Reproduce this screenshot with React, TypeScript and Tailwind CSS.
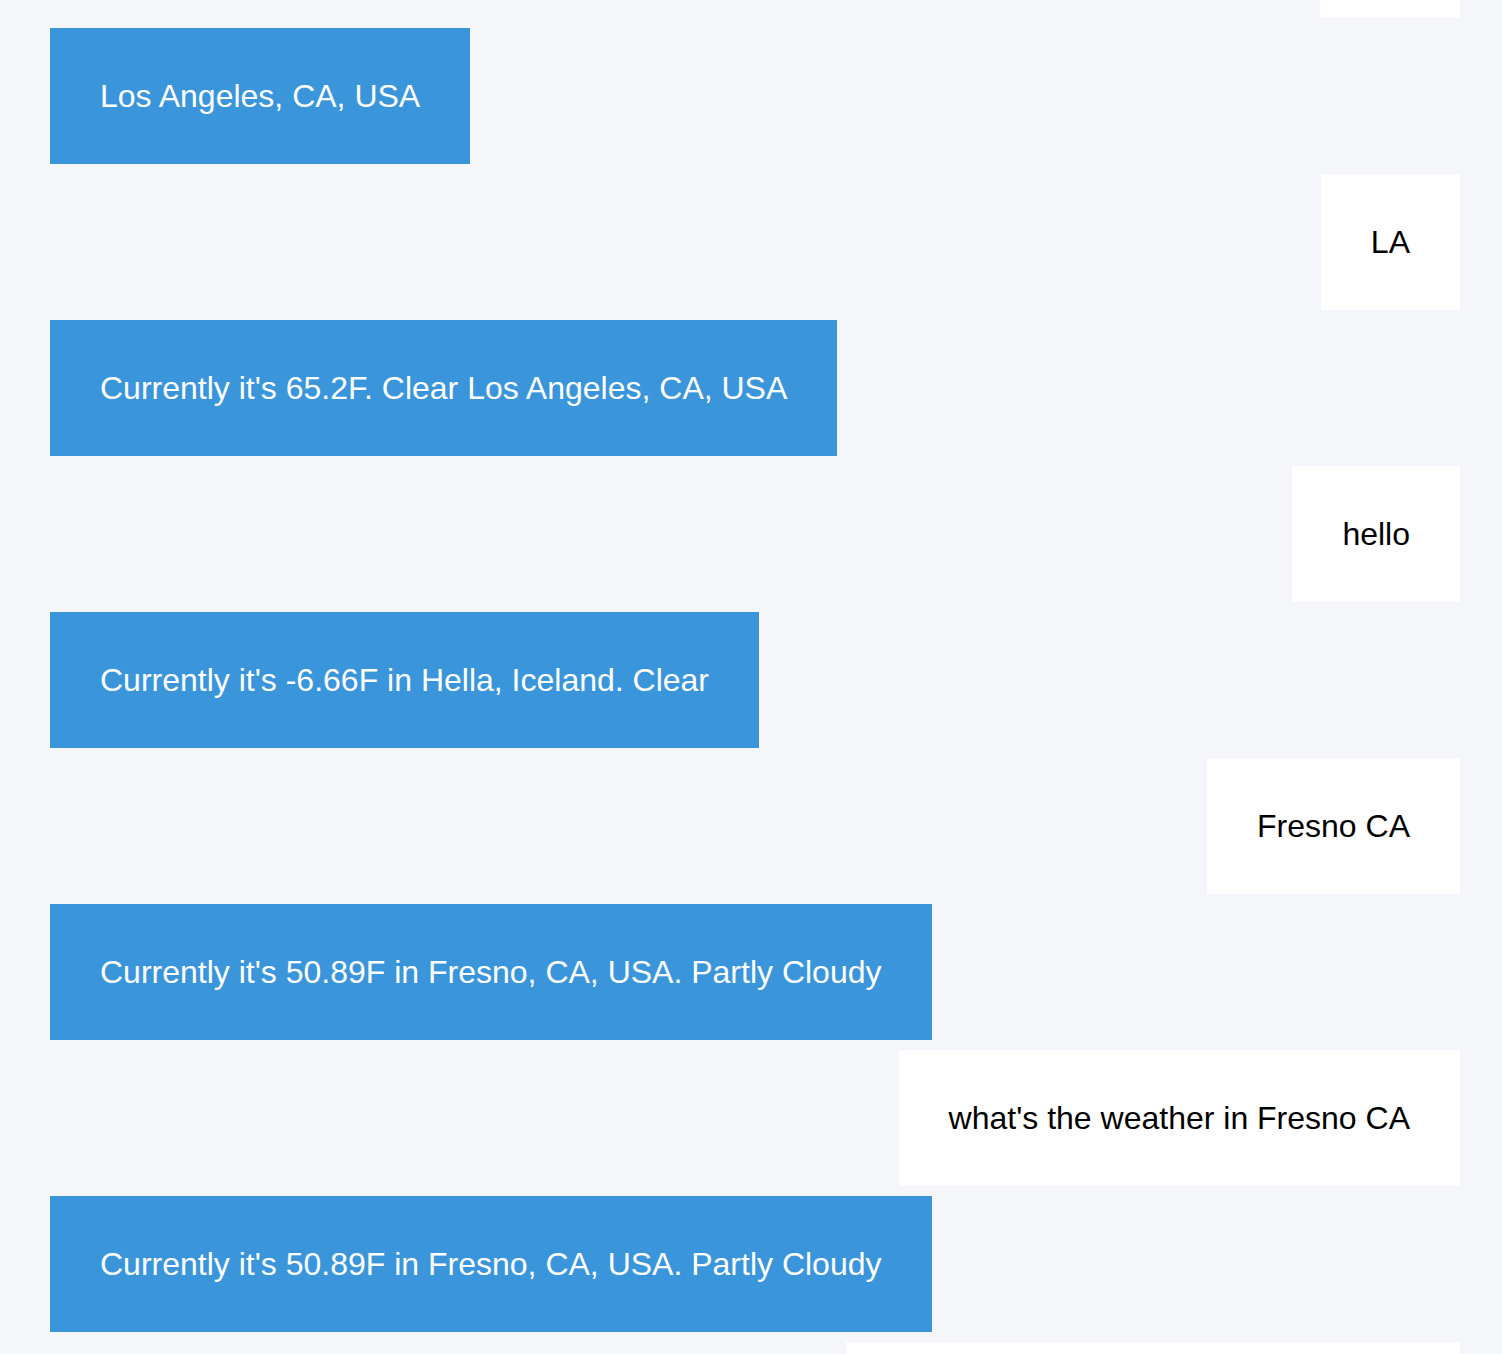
const messages: { from: "bot" | "user"; text: string }[] = [
  { from: "bot", text: "Los Angeles, CA, USA" },
  { from: "user", text: "LA" },
  { from: "bot", text: "Currently it's 65.2F. Clear Los Angeles, CA, USA" },
  { from: "user", text: "hello" },
  { from: "bot", text: "Currently it's -6.66F in Hella, Iceland. Clear" },
  { from: "user", text: "Fresno CA" },
  { from: "bot", text: "Currently it's 50.89F in Fresno, CA, USA. Partly Cloudy" },
  { from: "user", text: "what's the weather in Fresno CA" },
  { from: "bot", text: "Currently it's 50.89F in Fresno, CA, USA. Partly Cloudy" },
];

export default function App() {
  return (
    <div
      className="h-[1354px] overflow-hidden bg-[#f5f6fa] pl-[50px] pr-[42px]"
      style={{ fontFamily: '"Liberation Sans", Arial, sans-serif' }}
    >
      <div className="flex flex-col gap-[10px]">
        <div className="h-[18px] w-[140px] self-end bg-white" />
        {messages.map((m, i) =>
          m.from === "bot" ? (
            <div
              key={i}
              className="self-start whitespace-nowrap bg-[#3a95db] px-[50px] py-[50px] text-[32px] leading-[36px] text-white"
            >
              {m.text}
            </div>
          ) : (
            <div
              key={i}
              className="self-end whitespace-nowrap bg-white px-[50px] py-[50px] text-[32px] leading-[36px] text-black"
            >
              {m.text}
            </div>
          ),
        )}
        <div className="h-[136px] w-[614px] shrink-0 self-end bg-white" />
      </div>
    </div>
  );
}
